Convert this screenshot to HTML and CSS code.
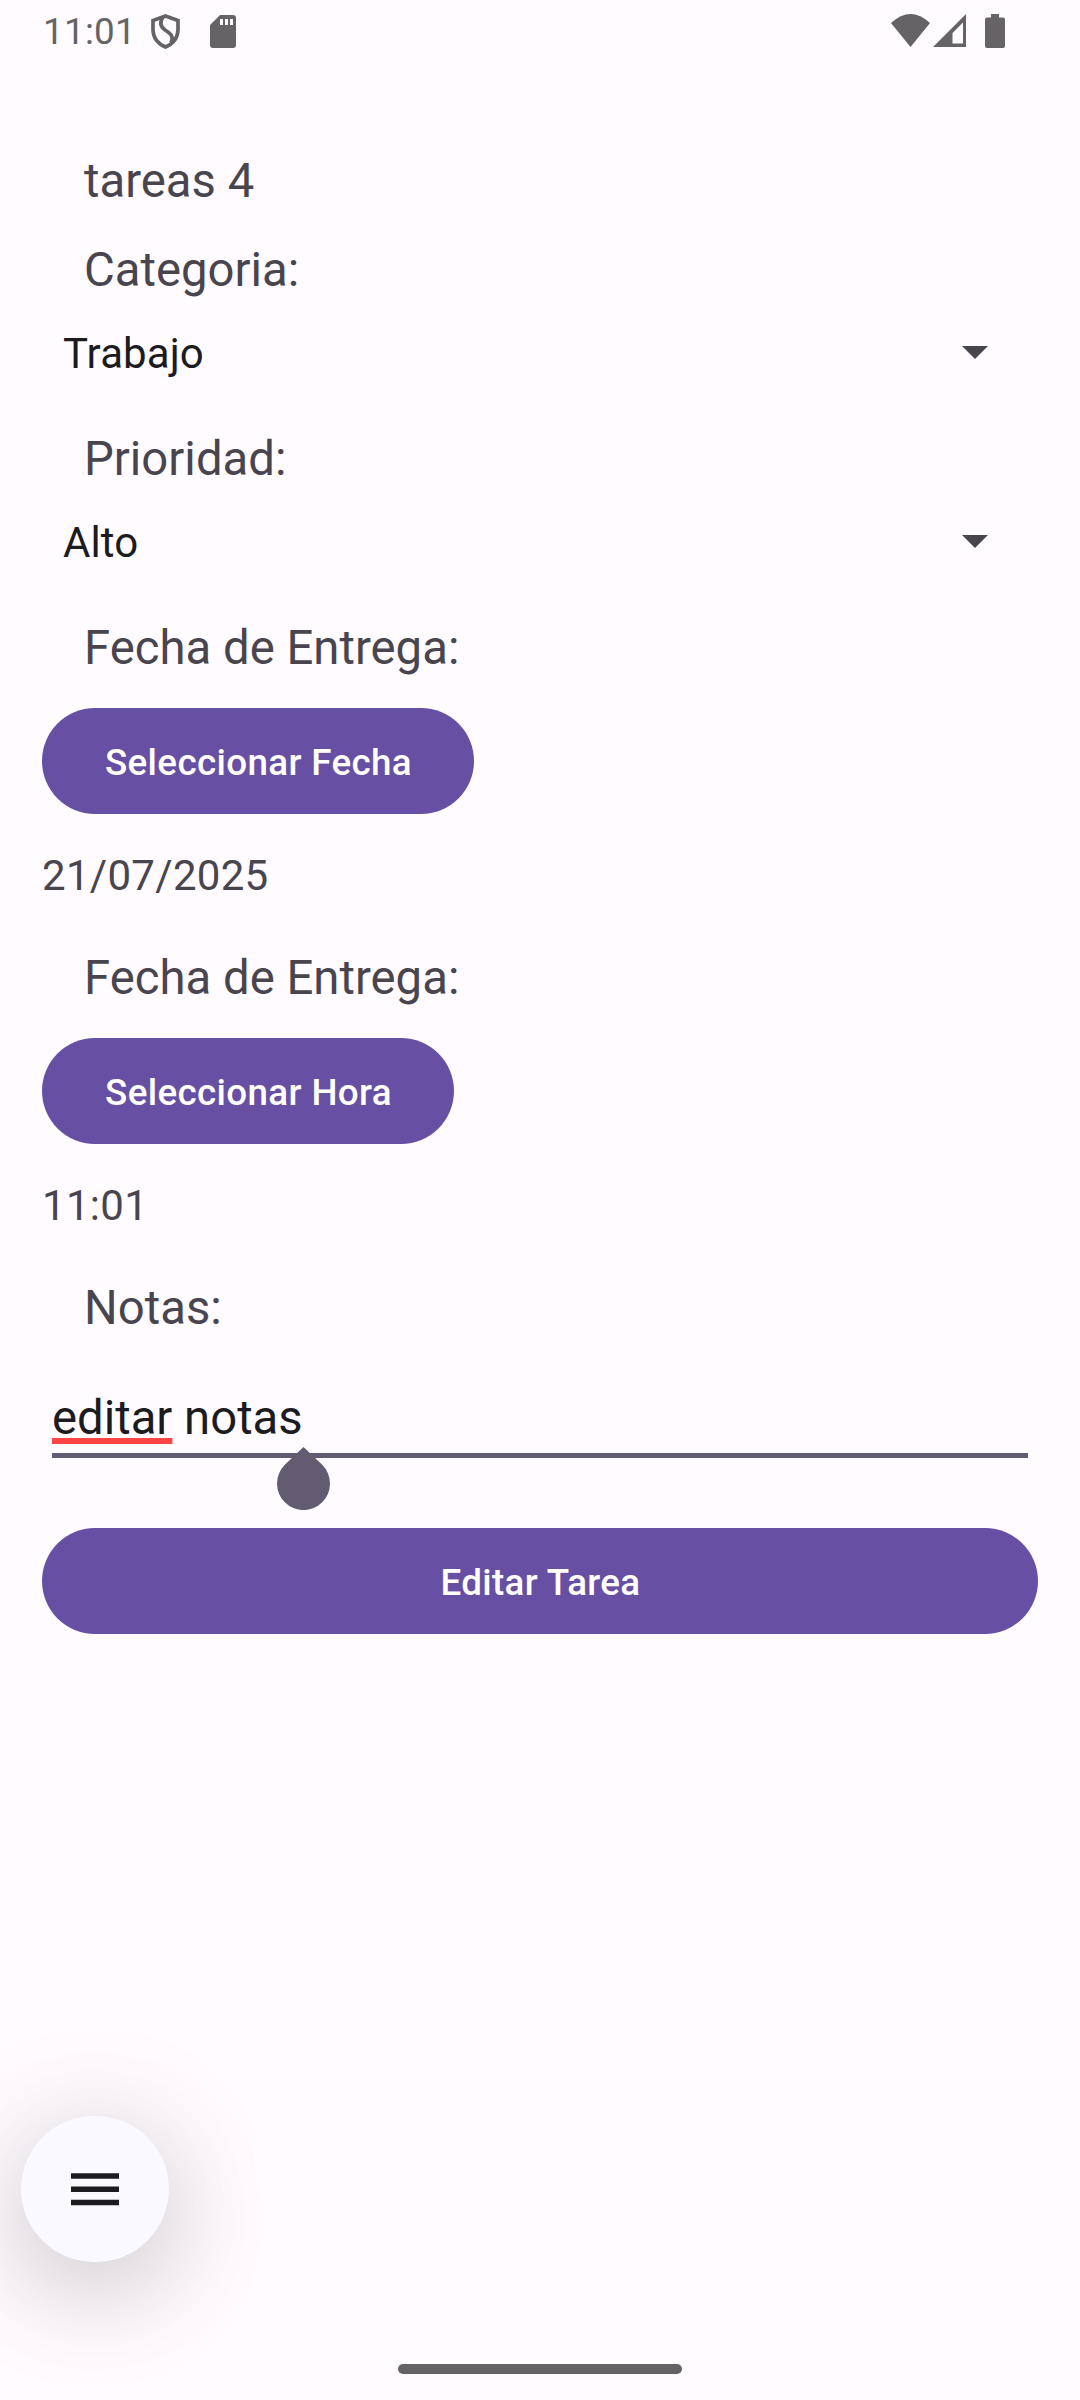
FILE: index.html
```html
<!DOCTYPE html>
<html lang="es">
<head>
<meta charset="utf-8">
<title>Editar Tarea</title>
<link rel="stylesheet" href="styles.css">
</head>
<body>
<header class="status">
  <span class="clock">11:01</span>
  <svg class="shield" width="29" height="35" viewBox="0 0 29 35" fill="none" stroke="#656366" stroke-width="3.7"><path d="M14.5 2L27 6.5V16Q26.500 28 14.500 33Q2.500 28 2 16V6.500Z"/><path d="M12 3C8 9 10 13 14 16C20 20 23 22 20 29"/></svg>
  <svg class="sd" width="26" height="33" viewBox="0 0 26 33"><path fill="#656366" fill-rule="evenodd" d="M10 0H23Q26 0 26 3V30Q26 33 23 33H3Q0 33 0 30V10ZM10 4V10H13V4ZM15 4V10H18V4ZM20 4V10H23V4Z"/></svg>
  <span class="space"></span>
  <svg width="114" height="34" viewBox="0 0 114 34" fill="#656366"><path d="M0 9Q19.500-9 39 9L19.500 33Z"/><path fill-rule="evenodd" d="M42 33L75 0V33ZM61.500 29.500H72V8.500L61.500 19Z"/><path d="M100 0H108V3.500H112Q114 3.500 114 5.500V32Q114 34 112 34H96Q94 34 94 32V5.500Q94 3.500 96 3.500H100Z"/></svg>
</header>
<main>
  <h1 class="label first">tareas 4</h1>
  <div class="label category">Categoria:</div>
  <div class="select"><span>Trabajo</span><i class="arrow"></i></div>
  <div class="label priority">Prioridad:</div>
  <div class="select"><span>Alto</span><i class="arrow"></i></div>
  <div class="label due">Fecha de Entrega:</div>
  <button class="date-button">Seleccionar Fecha</button>
  <div class="value">21/07/2025</div>
  <div class="label time">Fecha de Entrega:</div>
  <button class="time-button">Seleccionar Hora</button>
  <div class="value">11:01</div>
  <div class="label notes">Notas:</div>
  <div class="field"><span class="typo">editar</span> notas
    <svg class="handle" width="53" height="63" viewBox="0 0 53 63"><path fill="#625b71" d="M26.500 0L45.200 17.800A26.500 26.500 0 1 1 7.800 17.800Z"/></svg>
  </div>
  <button class="submit">Editar Tarea</button>
</main>
<button class="fab" aria-label="Menu"><svg width="48" height="33" viewBox="0 0 48 33"><path stroke="#1c1b1f" stroke-width="5.500" d="M0 3H48M0 16.300H48M0 29.500H48"/></svg></button>
<div class="home"></div>
</body>
</html>
```
FILE: styles.css
```css
*{box-sizing:border-box}
body{margin:0;height:2400px;position:relative;overflow:hidden;background:#fffbff;color:#49454f;font-family:Roboto,sans-serif}
.status{height:62px;padding:0 75px 0 43px;display:flex;align-items:center}
.clock{font-size:36.75px;letter-spacing:.3px;color:#656366}
.shield{margin-left:15px}.sd{margin-left:30px}.space{flex:1}
main{padding:0 42px;display:flex;flex-direction:column;align-items:flex-start}
.label{margin:0 0 0 42px;font-size:47.25px;line-height:56px;font-weight:400;letter-spacing:.02px}
.first{margin-top:91px}.category{margin-top:33px}
.select{align-self:stretch;height:63px;margin-top:23px;padding:0 50px 0 21px;display:flex;align-items:center;justify-content:space-between;font-size:42px;letter-spacing:.1px;color:#1c1b1f}
.select span{padding-top:1px}
.arrow{border:13px solid transparent;border-top-color:#49454f;border-bottom:0}
.priority,.due{margin-top:47px}
button{border:0;background:#6750a4;color:#fff;font:500 36.75px Roboto,sans-serif;letter-spacing:.36px;height:106px;border-radius:53px;padding:2px 0 0 1px}
.date-button{width:432px;margin-top:32px}.time-button{width:412px;margin-top:32px}
.value{margin-top:37px;font-size:42px;line-height:50px;letter-spacing:.3px}
.time,.notes{margin-top:49px}
.field{align-self:stretch;position:relative;height:76px;margin:46px 10px 0;padding-top:8px;border-bottom:5px solid #625b71;font-size:47.25px;line-height:56px;letter-spacing:0;color:#1c1b1f}
.typo{text-decoration:underline #ff4444 5.5px;text-underline-offset:4px;text-decoration-skip-ink:none}
.handle{position:absolute;left:225px;top:65px}
.submit{align-self:stretch;margin-top:70px}
.fab{position:absolute;left:21px;top:2116px;width:148px;height:146px;border-radius:74px;background:#f9f9ff;display:flex;align-items:center;justify-content:center;padding:0;box-shadow:0 30px 110px #0000002c,0 10px 140px #00000018}
.home{position:absolute;left:398px;top:2364px;width:284px;height:10px;border-radius:5px;background:#656366}
```
